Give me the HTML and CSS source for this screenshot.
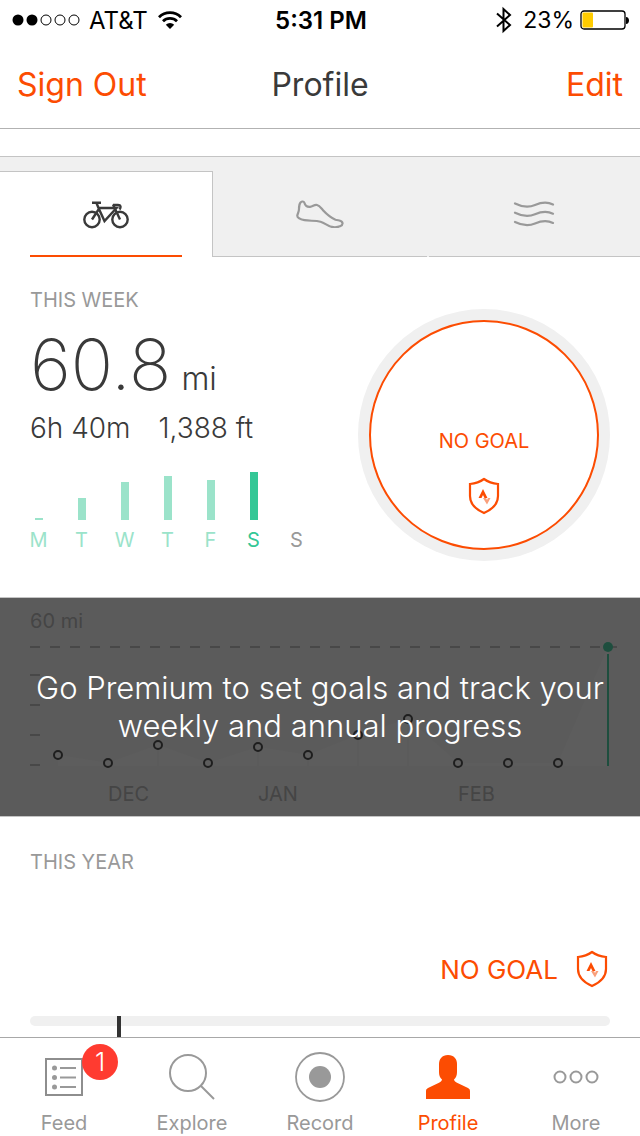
FILE: index.html
```html
<!DOCTYPE html>
<html lang="en">
<head>
  <meta charset="UTF-8" />
  <meta name="viewport" content="width=device-width, initial-scale=1.0" />
  <title>Profile</title>
  <link rel="stylesheet" href="styles.css">
</head>
<body>
  <div class="status-bar">
    <div class="status-left">
      <svg class="signal" width="68" height="12" viewBox="0 0 68 12">
        <circle cx="6" cy="6" r="5.5" />
        <circle cx="20" cy="6" r="5.5" />
        <circle class="empty" cx="34" cy="6" r="5" />
        <circle class="empty" cx="48" cy="6" r="5" />
        <circle class="empty" cx="62" cy="6" r="5" />
      </svg>
      <span>AT&amp;T</span>
      <svg class="wifi" width="26" height="20" viewBox="0 0 26 20">
        <path d="M2 7.2a15.6 15.6 0 0 1 22 0M6 11.2a10 10 0 0 1 14 0" fill="none" stroke="#000" stroke-width="2.8" />
        <path d="M13 19l-4.2-4.2a6 6 0 0 1 8.4 0z" />
      </svg>
    </div>
    <span class="time">5:31 PM</span>
    <div class="status-right">
      <svg class="bluetooth" width="18" height="28" viewBox="0 0 18 28">
        <path d="M2 7.5L15 19l-6.500 6V3L15 9 2 20.500" fill="none" stroke="#000" stroke-width="2" />
      </svg>
      <span>23%</span>
      <svg width="50" height="20" viewBox="0 0 50 20">
        <rect x="1" y="1" width="44" height="18" rx="3" fill="none" stroke="#000" stroke-width="1.3" />
        <rect x="2.5" y="2.5" width="10.5" height="15" rx="1" fill="#ffcc00" />
        <path d="M46 7c4 0 4 7 0 7z" />
      </svg>
    </div>
  </div>

  <header class="header">
    <button type="button" class="header-button">Sign Out</button>
    <h1>Profile</h1>
    <button type="button" class="header-button edit">Edit</button>
  </header>

  <main>
    <nav class="sports">
      <button type="button" class="sport active" aria-label="Ride">
        <svg width="46" height="28" viewBox="0 0 46 28" fill="none" stroke="#3a3a3a" stroke-width="2.4">
          <circle cx="9" cy="18.5" r="7.7" />
          <circle cx="37" cy="18.5" r="7.7" />
          <path d="M9 1.8h9M13.5 2l2 5 6 13L33.5 7h-17L9 18.5M30 3.5l7 15M30 4h5c3 0 3.2 2 1.5 4.5" />
        </svg>
      </button>
      <button type="button" class="sport" aria-label="Run">
        <svg width="48" height="28" viewBox="0 0 48 28" fill="none" stroke="#999" stroke-width="2.2" stroke-linejoin="round">
          <path d="M4.5 2.5C6 1 8 1.2 8.500 3c.6 2.500 2.500 4 5.500 3.800 3-.2 4-2.400 7-1.800 2.500.6 4 3 6 5.200 4.500 4.800 9 8 12.500 9.500 3 1 6.500.3 7 3.300.5 3-4 4.500-9 4.200-5-.3-8-4-13-5.500-5-1.500-11-.5-16-1.500C5 19.500 1 18 1.300 15.500c.3-2 1.700-3.500 1.700-6.500 0-2.500.2-5 1.500-6.500z" />
        </svg>
      </button>
      <button type="button" class="sport" aria-label="Swim">
        <svg width="42" height="28" viewBox="0 0 42 28" fill="none" stroke="#999" stroke-width="2.2" stroke-linecap="round">
          <path d="M2 3.5c6 3 12 5 20 1.500 7-3 12-3.500 18-.5M2 12.700c6 3 12 5 20 1.500 7-3 12-3.500 18-.5M2 21.900c6 3 12 5 20 1.500 7-3 12-3.500 18-.5" />
        </svg>
      </button>
    </nav>

    <section class="week">
      <div class="week-stats">
        <h2>THIS WEEK</h2>
        <p class="distance"><span>60.8</span><small>mi</small></p>
        <p class="totals"><span>6h 40m</span><span>1,388 ft</span></p>
        <div class="days">
          <div class="day"><i style="height: 2px"></i>M</div>
          <div class="day"><i style="height: 22px"></i>T</div>
          <div class="day"><i style="height: 38px"></i>W</div>
          <div class="day"><i style="height: 44px"></i>T</div>
          <div class="day"><i style="height: 40px"></i>F</div>
          <div class="day today"><i style="height: 48px"></i>S</div>
          <div class="day future"><i style="height: 0px"></i>S</div>
        </div>
      </div>
      <div class="goal-ring">
        <div class="goal-inner">
          <span>NO GOAL</span>
          <svg class="shield" width="32" height="38" viewBox="0 0 32 38">
            <path d="M16 2c4 3 8 4.500 14 5v12c0 8-6 13.500-14 17C8 32.500 2 27 2 19V7c6-.5 10-2 14-5z" fill="none" stroke="#fc4c02" stroke-width="2.2" />
            <path d="M10.500 21L15 12l4.500 9h-3L15 18l-1.500 3z" fill="#fc4c02" />
            <path d="M15 21h3l1 2 1-2h2.500L19 27.500z" fill="#f9a07c" />
          </svg>
        </div>
      </div>
    </section>

    <section class="history">
      <svg class="chart" viewBox="0 0 640 218">
        <path class="area" d="M58 157L108 165 158 147 208 165 258 149 308 157 358 137 408 121 458 165 558 165 608 49V168H58z" />
        <path class="drops" d="M158 147v21M258 149v19M308 157v11M358 137v31M408 121v47" />
        <path class="goal-line" d="M30 49H617" />
        <path class="ticks" d="M30 77h10M30 107h10M30 137h10M30 167h10" />
        <g class="points">
          <circle cx="58" cy="157" r="4" />
          <circle cx="108" cy="165" r="4" />
          <circle cx="158" cy="147" r="4" />
          <circle cx="208" cy="165" r="4" />
          <circle cx="258" cy="149" r="4" />
          <circle cx="308" cy="157" r="4" />
          <circle cx="358" cy="137" r="4" />
          <circle cx="408" cy="121" r="4" />
          <circle cx="458" cy="165" r="4" />
          <circle cx="508" cy="165" r="4" />
          <circle cx="558" cy="165" r="4" />
        </g>
        <path class="current" d="M608 56V168" />
        <circle class="current-dot" cx="608" cy="49" r="5" />
        <text x="30" y="30">60 mi</text>
        <text x="108" y="203">DEC</text>
        <text x="258" y="203">JAN</text>
        <text x="458" y="203">FEB</text>
      </svg>
      <div class="premium">
        <p>Go Premium to set goals and track your<br>weekly and annual progress</p>
      </div>
    </section>

    <section class="year">
      <h2>THIS YEAR</h2>
      <div class="year-goal">
        <span>NO GOAL</span>
        <svg class="shield" width="32" height="38" viewBox="0 0 32 38">
          <path d="M16 2c4 3 8 4.500 14 5v12c0 8-6 13.500-14 17C8 32.500 2 27 2 19V7c6-.5 10-2 14-5z" fill="none" stroke="#fc4c02" stroke-width="2.2" />
          <path d="M10.500 21L15 12l4.500 9h-3L15 18l-1.500 3z" fill="#fc4c02" />
          <path d="M15 21h3l1 2 1-2h2.500L19 27.500z" fill="#f9a07c" />
        </svg>
      </div>
      <div class="year-bar"><div class="marker"></div></div>
    </section>
  </main>

  <nav class="tab-bar">
    <a href="#feed">
      <span class="tab-icon">
        <svg width="40" height="40" viewBox="0 0 40 40">
          <rect x="2" y="2" width="36" height="36" fill="none" stroke="#8e8e8e" stroke-width="2" />
          <path d="M16 11h16M16 20.500h16M16 30h16" stroke="#999" stroke-width="2" />
          <circle cx="10.500" cy="11" r="2.500" />
          <circle cx="10.500" cy="20.500" r="2.500" />
          <circle cx="10.500" cy="30" r="2.500" />
        </svg>
        <b class="badge">1</b>
      </span>
      Feed
    </a>
    <a href="#explore">
      <span class="tab-icon">
        <svg width="46" height="46" viewBox="0 0 46 46" fill="none" stroke="#999" stroke-width="2">
          <circle cx="19" cy="19" r="18" />
          <path d="M32 32l13 13" />
        </svg>
      </span>
      Explore
    </a>
    <a href="#record">
      <span class="tab-icon">
        <svg width="50" height="50" viewBox="0 0 50 50">
          <circle cx="25" cy="25" r="24" fill="none" stroke="#999" stroke-width="1.8" />
          <circle cx="25" cy="25" r="11" />
        </svg>
      </span>
      Record
    </a>
    <a href="#profile" class="selected">
      <span class="tab-icon">
        <svg width="44" height="44" viewBox="0 0 44 44">
          <path d="M22 0c6 0 9 4 9 9v8c0 3-.8 5.500-3 7.500.3 1.500 1 2.300 3 3.200l11 5.300c1.500.8 2 1.700 2 3.500V44H0v-7.500c0-1.800.5-2.700 2-3.500l11-5.300c2-.9 2.700-1.700 3-3.200-2.200-2-3-4.500-3-7.500V9c0-5 3-9 9-9z" />
        </svg>
      </span>
      Profile
    </a>
    <a href="#more">
      <span class="tab-icon">
        <svg width="46" height="14" viewBox="0 0 46 14" fill="none" stroke="#999" stroke-width="2">
          <circle cx="7" cy="7" r="5.500" />
          <circle cx="23" cy="7" r="5.500" />
          <circle cx="39" cy="7" r="5.500" />
        </svg>
      </span>
      More
    </a>
  </nav>
</body>
</html>
```

FILE: styles.css
```css
* {
  box-sizing: border-box;
}

body {
  display: flex;
  flex-direction: column;
  min-height: 100vh;
  margin: 0;
  background-color: #fff;
  color: #3a3a3a;
  font-family: Inter, "Liberation Sans", sans-serif;
}

h1, h2, p {
  margin: 0;
  font-weight: 400;
}

svg {
  display: block;
}

button {
  padding: 0;
  border: none;
  background: none;
  font-family: inherit;
  cursor: pointer;
}

/* Status bar */
.status-bar {
  display: grid;
  grid-template-columns: 1fr auto 1fr;
  align-items: center;
  height: 40px;
  padding: 0 10px 0 12px;
  color: #000;
  font-size: 24px;
}

.status-left, .status-right {
  display: flex;
  align-items: center;
}

.status-left {
  gap: 9px;
}

.status-right {
  justify-content: flex-end;
  gap: 6px;
  font-size: 23px;
}

.signal .empty {
  fill: none;
  stroke: #000;
}

.bluetooth {
  margin-right: 4px;
}

.time {
  font-weight: 600;
}

/* Header */
.header {
  display: grid;
  grid-template-columns: 1fr auto 1fr;
  align-items: center;
  height: 89px;
  padding: 0 17px;
  border-bottom: 1px solid #b2b2b2;
}

.header h1 {
  font-size: 32px;
}

.header-button {
  color: #fc4c02;
  font-size: 32px;
  text-align: left;
}

.header-button.edit {
  text-align: right;
}

/* Sport tabs */
.sports {
  display: grid;
  grid-template-columns: repeat(3, 1fr);
  height: 101px;
  margin-top: 27px;
  border-top: 1px solid #c4c4c4;
  background-color: #f0f0f0;
}

.sport {
  display: flex;
  align-items: center;
  justify-content: center;
  padding-top: 15px;
  border-bottom: 1px solid #c4c4c4;
}

.sport:last-child {
  margin-left: 2px;
}

.sport.active {
  position: relative;
  margin-top: 14px;
  padding-top: 0;
  border-top: 1px solid #c4c4c4;
  border-right: 1px solid #c4c4c4;
  border-bottom: none;
  background-color: #fff;
}

.sport.active::after {
  content: "";
  position: absolute;
  right: 30px;
  bottom: 0;
  left: 30px;
  height: 2px;
  background-color: #fc4c02;
}

/* This week */
h2 {
  color: #999;
  font-size: 20px;
  line-height: 24px;
}

.week {
  display: flex;
  justify-content: space-between;
  padding: 31px 30px 36px;
}

.distance {
  display: flex;
  align-items: baseline;
  gap: 10px;
  margin-top: 22px;
  font-size: 70px;
  font-weight: 200;
  line-height: 62px;
}

.distance small {
  font-size: 32px;
  font-weight: 300;
}

.totals {
  display: flex;
  gap: 28px;
  font-size: 28px;
  font-weight: 300;
  line-height: 36px;
}

.days {
  display: flex;
  gap: 26px;
  margin-top: 26px;
}

.day {
  display: flex;
  flex-direction: column;
  align-items: center;
  justify-content: flex-end;
  width: 17px;
  height: 80px;
  color: #9be3ca;
  font-size: 20px;
  line-height: 24px;
}

.day i {
  width: 8px;
  margin-bottom: 8px;
  background-color: #9be3ca;
}

.day.today {
  color: #34c796;
}

.day.today i {
  background-color: #34c796;
}

.day.future {
  color: #999;
}

.goal-ring {
  flex: none;
  width: 252px;
  height: 252px;
  margin-top: 21px;
  padding: 11px;
  border-radius: 50%;
  background-color: #f0f0f0;
}

.goal-inner {
  display: flex;
  flex-direction: column;
  align-items: center;
  gap: 24px;
  height: 230px;
  padding-top: 107px;
  border: 2px solid #fc4c02;
  border-radius: 50%;
  background-color: #fff;
  color: #fc4c02;
  font-size: 20px;
  line-height: 24px;
}

/* Weekly history */
.history {
  position: relative;
  border-top: 1px solid #c4c4c4;
  border-bottom: 1px solid #c4c4c4;
  background-color: #f0f0f0;
}

.chart {
  width: 100%;
}

.chart text {
  fill: #aaa;
  font-size: 20px;
}

.area {
  fill: #f6f6f6;
}

.drops {
  stroke: #eee;
  stroke-width: 2;
}

.goal-line {
  stroke: #b4b4b4;
  stroke-width: 2;
  stroke-dasharray: 10 10;
}

.ticks {
  stroke: #b4b4b4;
  stroke-width: 2;
}

.points {
  fill: #f4f4f4;
  stroke: #333;
  stroke-width: 2;
}

.current {
  stroke: #34c796;
  stroke-width: 2;
}

.current-dot {
  fill: #34c796;
}

.premium {
  position: absolute;
  inset: 0;
  display: flex;
  align-items: center;
  justify-content: center;
  background-color: rgba(20, 20, 20, 0.68);
  color: #fff;
  font-size: 31px;
  line-height: 38px;
  text-align: center;
}

.premium p {
  font-weight: 300;
  white-space: nowrap;
}

/* This year */
.year {
  padding: 33px 30px 0;
}

.year-goal {
  display: flex;
  align-items: center;
  justify-content: flex-end;
  gap: 18px;
  margin-top: 76px;
  padding-right: 2px;
  color: #fc4c02;
  font-size: 26px;
}

.year-bar {
  height: 10px;
  margin-top: 28px;
  border-radius: 5px;
  background-color: #f0f0f0;
}

.marker {
  width: 4px;
  height: 21px;
  margin-left: 15%;
  background-color: #333;
}

/* Tab bar */
.tab-bar {
  position: sticky;
  bottom: 0;
  display: grid;
  grid-template-columns: repeat(5, 1fr);
  height: 99px;
  margin-top: auto;
  border-top: 1px solid #a8a8a8;
  background-color: #fff;
}

.tab-bar a {
  display: flex;
  flex-direction: column;
  align-items: center;
  color: #999;
  fill: #999;
  font-size: 20px;
  line-height: 24px;
  text-decoration: none;
}

.tab-bar a.selected {
  color: #fc4c02;
  fill: #fc4c02;
}

.tab-icon {
  position: relative;
  display: flex;
  align-items: center;
  height: 73px;
  padding-top: 5px;
}

.badge {
  position: absolute;
  top: 6px;
  left: 38px;
  width: 36px;
  height: 36px;
  border-radius: 50%;
  background-color: #ff3b30;
  color: #fff;
  font-size: 26px;
  font-weight: 300;
  line-height: 36px;
  text-align: center;
}
```
